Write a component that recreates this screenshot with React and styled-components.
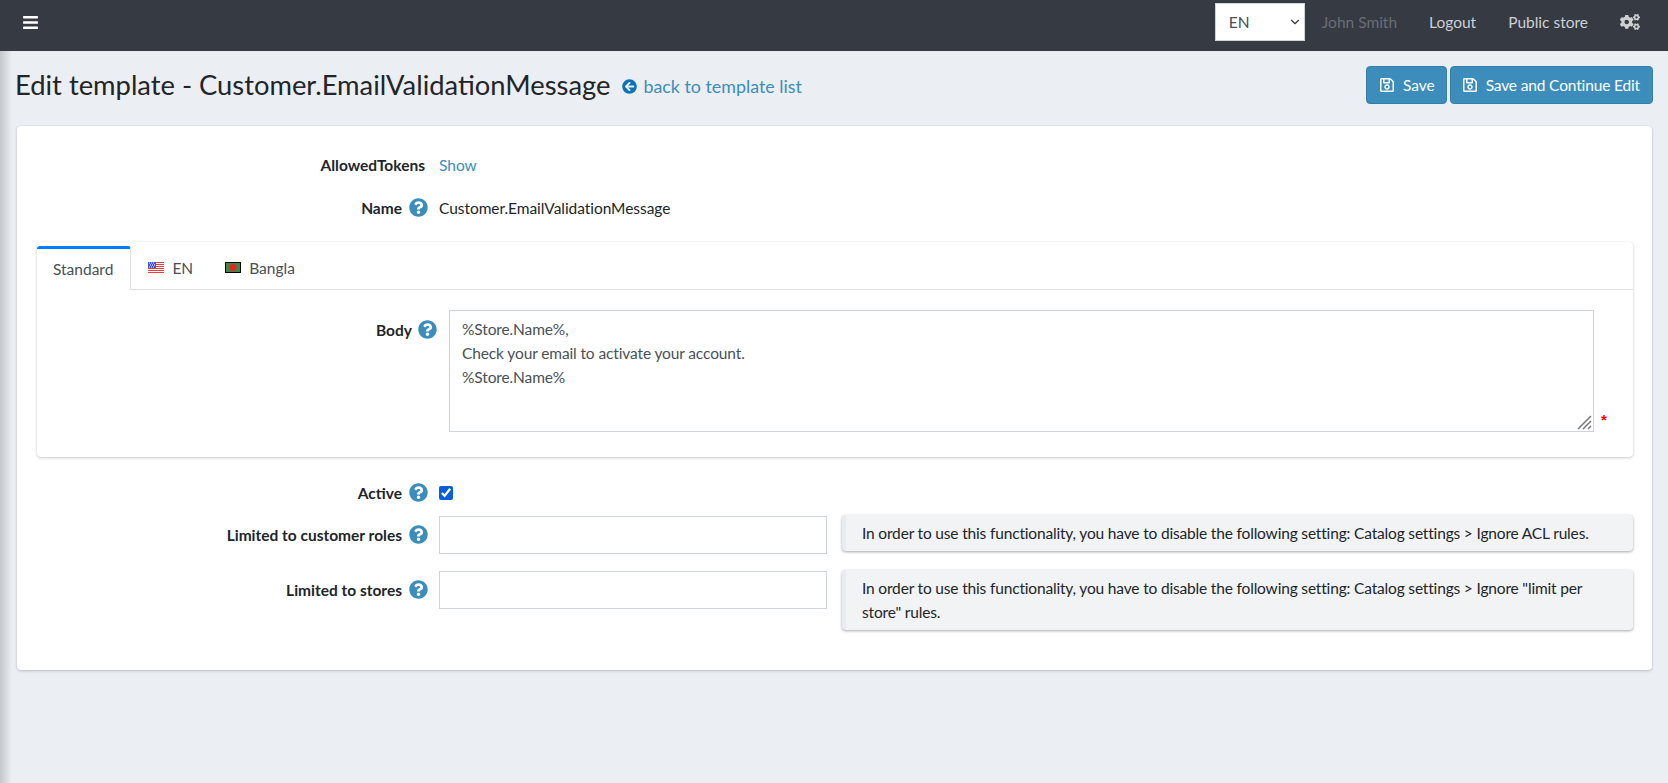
import React from 'react';
import styled, { createGlobalStyle } from 'styled-components';
import { FaArrowCircleLeft, FaBars, FaCogs, FaQuestionCircle, FaRegSave } from 'react-icons/fa';
import { LuChevronDown } from 'react-icons/lu';

const GlobalStyle = createGlobalStyle`
    html, body {
        margin: 0;
        height: 100%;
    }
    body {
        background: #ebeef3;
        color: #212529;
        font-family: 'Lato', 'Noto Sans', sans-serif;
        font-size: 15.5px;
        line-height: 24px;
        overflow: hidden;
    }
`;

const Topbar = styled.header`
    height: 51px;
    box-sizing: border-box;
    display: flex;
    align-items: center;
    padding: 0 12px 7px 22px;
    background: #353a43;
`;

const MenuButton = styled.span`
    display: flex;
    color: #fff;
    font-size: 17px;
`;

const TopbarRight = styled.nav`
    margin-left: auto;
    display: flex;
    align-items: center;
`;

const SelectWrap = styled.div`
    position: relative;
    width: 90px;
    height: 38px;
    margin-right: 1px;
    svg {
        position: absolute;
        right: 3px;
        top: 12px;
        color: #343a40;
        pointer-events: none;
    }
`;

const LangSelect = styled.select`
    appearance: none;
    width: 100%;
    height: 100%;
    box-sizing: border-box;
    padding: 0 0 0 13px;
    border: 1px solid #ced4da;
    border-radius: 0;
    background: #fff;
    color: #495057;
    font: inherit;
`;

const NavLink = styled.a`
    padding: 0 16px;
    color: ${(props) => (props.$muted ? '#6a6e75' : '#ced0d3')};
    display: flex;
    align-items: center;
    svg {
        font-size: 20px;
    }
`;

const PageBody = styled.main`
    position: relative;
    height: 732px;
    &:before {
        content: '';
        position: absolute;
        top: 0;
        bottom: 0;
        left: 0;
        width: 12px;
        background: linear-gradient(90deg, #c4c7cc 0%, #ebeef3 100%);
    }
`;

const PageHeader = styled.div`
    position: relative;
    height: 75px;
    box-sizing: border-box;
    display: flex;
    align-items: flex-start;
    padding: 15px 15px 0 15px;
`;

const Title = styled.h1`
    margin: 0;
    font-size: 27.35px;
    line-height: 38px;
    font-weight: 400;
`;

const BackLink = styled.a`
    display: flex;
    align-items: center;
    gap: 6px;
    margin: 3px 0 0 12px;
    height: 34px;
    color: #3c8dbc;
    font-size: 17.85px;
    svg {
        color: #0b72b9;
        font-size: 15px;
    }
`;

const Actions = styled.div`
    margin-left: auto;
    display: flex;
    gap: 3px;
`;

const SaveButton = styled.button`
    height: 38px;
    display: flex;
    align-items: center;
    gap: 8px;
    padding: ${(props) => (props.$long ? '0 12px 0 11px' : '0 11px 0 12px')};
    background: #3c8dbc;
    border: 1px solid #367fa9;
    border-radius: 4px;
    color: #fff;
    font: inherit;
    letter-spacing: ${(props) => (props.$long ? '-0.15px' : '0')};
    svg {
        font-size: 16px;
    }
`;

const Card = styled.section`
    position: relative;
    margin: 0 16px 0 17px;
    height: 544px;
    box-sizing: border-box;
    padding: 27px 19px 0;
    background: #fff;
    border-radius: 4px;
    box-shadow: 0 0 1px rgba(0, 0, 0, 0.13), 0 1px 3px rgba(0, 0, 0, 0.2);
`;

const Row = styled.div`
    display: grid;
    grid-template-columns: 392px 1fr;
    column-gap: 11px;
    align-items: ${(props) => (props.$top ? 'start' : 'center')};
    margin-bottom: ${(props) => props.$gap || 0}px;
`;

const Label = styled.div`
    display: flex;
    justify-content: flex-end;
    align-items: center;
    gap: 7px;
    min-height: ${(props) => (props.$tall ? '38px' : '24px')};
    margin-top: ${(props) => (props.$tall ? '1px' : '0')};
    padding-right: ${(props) => (props.$bare ? '3px' : '0')};
    font-weight: 700;
`;

const Help = styled(FaQuestionCircle)`
    color: #3c8dbc;
    font-size: 19px;
    flex: none;
    margin-top: -2px;
`;

const TextLink = styled.a`
    color: #3c8dbc;
`;

const PlainText = styled.div`
    letter-spacing: -0.05px;
`;

const TabsCard = styled.div`
    margin: 0 0 24px 1px;
    height: 215px;
    box-sizing: border-box;
    padding-top: 4px;
    background: #fff;
    border-radius: 4px;
    box-shadow: 0 0 1px rgba(0, 0, 0, 0.13), 0 1px 3px rgba(0, 0, 0, 0.2);
`;

const TabStrip = styled.div`
    display: flex;
    height: 44px;
    box-sizing: border-box;
    border-bottom: 1px solid #dee2e6;
`;

const Tab = styled.div`
    display: flex;
    align-items: center;
    gap: 8px;
    height: 43px;
    box-sizing: border-box;
    padding: 0 15px 0 17px;
    color: #495057;
`;

const ActiveTab = styled(Tab)`
    height: 44px;
    padding: 0 17px 1px 16px;
    background: #fff;
    border-top: 3px solid #007bff;
    border-right: 1px solid #dee2e6;
    border-radius: 3px 3px 0 0;
`;

const TabBody = styled.div`
    display: grid;
    grid-template-columns: 400px 1145px 1fr;
    column-gap: 12px;
    padding-top: 20px;
`;

const BodyLabel = styled(Label)`
    align-self: start;
    margin-top: 0;
    padding-top: 8px;
    gap: 6px;
`;

const BodyFieldWrap = styled.div`
    position: relative;
    svg {
        position: absolute;
        right: 2px;
        bottom: 2px;
        pointer-events: none;
    }
`;

const BodyField = styled.textarea`
    display: block;
    width: 100%;
    height: 122px;
    box-sizing: border-box;
    padding: 6px 12px;
    border: 1px solid #ced4da;
    border-radius: 0;
    color: #495057;
    font: inherit;
    letter-spacing: -0.12px;
    resize: none;
`;

const Required = styled.span`
    align-self: end;
    margin: 0 0 2px -5px;
    color: #f00;
    font-family: 'Liberation Sans', sans-serif;
    font-size: 15px;
    font-weight: 700;
    line-height: 20px;
`;

const CheckBox = styled.input`
    display: block;
    width: 14px;
    height: 14px;
    margin: 0;
    accent-color: #0b5ed7;
`;

const FieldWithNote = styled.div`
    display: flex;
    align-items: flex-start;
    gap: 15px;
`;

const PlainInput = styled.input`
    flex: none;
    width: 388px;
    height: 38px;
    box-sizing: border-box;
    margin-top: 1px;
    border: 1px solid #ced4da;
    background: #fff;
`;

const Note = styled.div`
    flex: 1;
    box-sizing: border-box;
    padding: 6px 20px 6px 16px;
    background: #f2f3f5;
    border-left: 4px solid #e9ebee;
    border-radius: 4px;
    color: #212529;
    letter-spacing: -0.17px;
    box-shadow: 0 1px 3px rgba(0, 0, 0, 0.35);
`;

const UsFlag = () => (
    <svg width="16" height="11" viewBox="0 0 16 11">
        <rect width="16" height="11" fill="#fff" />
        {[0, 2, 4, 6, 8, 10].map((y) => (
            <rect key={y} y={y} width="16" height="1" fill="#e0433f" />
        ))}
        <rect width="8" height="6" fill="#3f51e0" />
        <path d="M1 1h1M3 1h1M5 1h1M2 3h1M4 3h1M6 3h1M1 5h1M3 5h1M5 5h1" stroke="#fff" strokeWidth="1" />
    </svg>
);

const BdFlag = () => (
    <svg width="16" height="11" viewBox="0 0 16 11">
        <rect x="0.5" y="0.5" width="15" height="10" fill="#3a8a45" stroke="#000" />
        <circle cx="8" cy="5.5" r="3.5" fill="#f02020" />
    </svg>
);

const ResizeGrip = () => (
    <svg width="15" height="15" viewBox="0 0 15 15">
        <path d="M1 14L14 1M6 14L14 6M11 14L14 11" stroke="#777" strokeWidth="1.5" fill="none" />
    </svg>
);

const App = () => (
    <>
        <GlobalStyle />
        <Topbar>
            <MenuButton>
                <FaBars />
            </MenuButton>
            <TopbarRight>
                <SelectWrap>
                    <LangSelect defaultValue="EN">
                        <option>EN</option>
                        <option>Bangla</option>
                    </LangSelect>
                    <LuChevronDown size={14} strokeWidth={2} />
                </SelectWrap>
                <NavLink $muted>John Smith</NavLink>
                <NavLink>Logout</NavLink>
                <NavLink>Public store</NavLink>
                <NavLink>
                    <FaCogs />
                </NavLink>
            </TopbarRight>
        </Topbar>
        <PageBody>
            <PageHeader>
                <Title>Edit template - Customer.EmailValidationMessage</Title>
                <BackLink>
                    <FaArrowCircleLeft />
                    back to template list
                </BackLink>
                <Actions>
                    <SaveButton>
                        <FaRegSave />
                        Save
                    </SaveButton>
                    <SaveButton $long>
                        <FaRegSave />
                        Save and Continue Edit
                    </SaveButton>
                </Actions>
            </PageHeader>
            <Card>
                <Row $gap={19}>
                    <Label $bare>AllowedTokens</Label>
                    <TextLink>Show</TextLink>
                </Row>
                <Row $gap={22}>
                    <Label>
                        Name
                        <Help />
                    </Label>
                    <PlainText>Customer.EmailValidationMessage</PlainText>
                </Row>
                <TabsCard>
                    <TabStrip>
                        <ActiveTab>Standard</ActiveTab>
                        <Tab>
                            <UsFlag />
                            EN
                        </Tab>
                        <Tab>
                            <BdFlag />
                            Bangla
                        </Tab>
                    </TabStrip>
                    <TabBody>
                        <BodyLabel>
                            Body
                            <Help />
                        </BodyLabel>
                        <BodyFieldWrap>
                            <BodyField
                                defaultValue={'%Store.Name%,\nCheck your email to activate your account.\n%Store.Name%'}
                            />
                            <ResizeGrip />
                        </BodyFieldWrap>
                        <Required>*</Required>
                    </TabBody>
                </TabsCard>
                <Row $gap={10}>
                    <Label>
                        Active
                        <Help />
                    </Label>
                    <CheckBox type="checkbox" defaultChecked />
                </Row>
                <Row $gap={16} $top>
                    <Label $tall>
                        Limited to customer roles
                        <Help />
                    </Label>
                    <FieldWithNote>
                        <PlainInput />
                        <Note>
                            In order to use this functionality, you have to disable the following setting: Catalog
                            settings &gt; Ignore ACL rules.
                        </Note>
                    </FieldWithNote>
                </Row>
                <Row $top>
                    <Label $tall>
                        Limited to stores
                        <Help />
                    </Label>
                    <FieldWithNote>
                        <PlainInput />
                        <Note>
                            In order to use this functionality, you have to disable the following setting: Catalog
                            settings &gt; Ignore "limit per store" rules.
                        </Note>
                    </FieldWithNote>
                </Row>
            </Card>
        </PageBody>
    </>
);

export default App;
